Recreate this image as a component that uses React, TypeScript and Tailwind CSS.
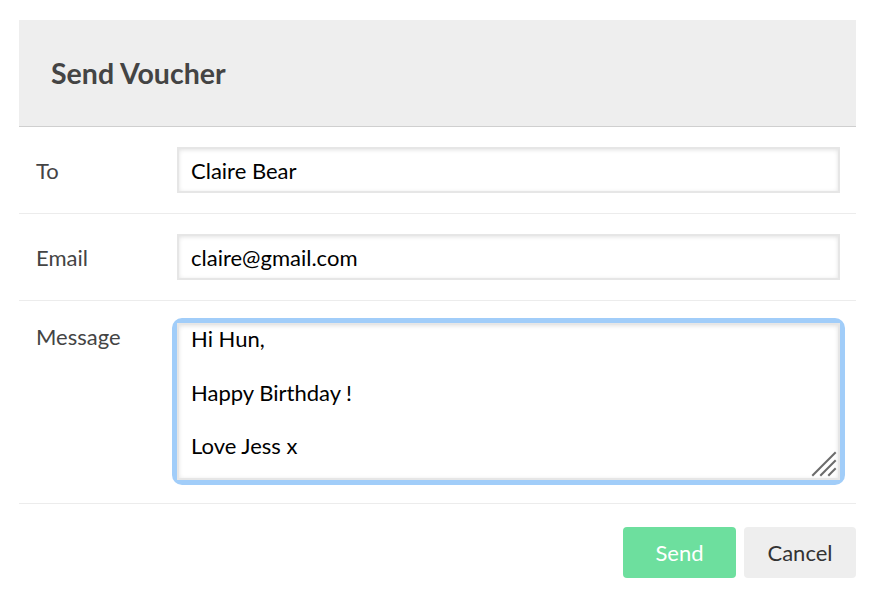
import React from "react";

const font = { fontFamily: "Lato, 'Open Sans', sans-serif" };

function Grip() {
  return (
    <svg
      className="pointer-events-none absolute bottom-[3px] right-[3px]"
      width="26"
      height="26"
      viewBox="0 0 26 26"
    >
      <g stroke="#6b6b6b" strokeWidth="2" strokeLinecap="square">
        <line x1="2" y1="24" x2="24" y2="2" />
        <line x1="10" y1="24" x2="24" y2="10" />
        <line x1="18" y1="24" x2="24" y2="18" />
      </g>
    </svg>
  );
}

function Row({ label, children, top }: { label: string; children: React.ReactNode; top?: boolean }) {
  return (
    <div className={`flex border-b border-[#ececec] pl-[17px] pr-[16px] ${top ? "items-start pt-[22px] pb-[23px]" : "items-center py-[20px]"}`}>
      <div className="w-[141px] shrink-0 text-[22px] leading-[27px] text-[#444]">{label}</div>
      <div className="flex-1">{children}</div>
    </div>
  );
}

function Input({ value }: { value: string }) {
  return (
    <input
      readOnly
      value={value}
      className="block h-[46px] w-full border-2 border-[#e6e6e6] bg-white px-[12px] text-[22px] text-black shadow-[inset_0_1px_4px_rgba(0,0,0,0.12)] outline-none"
      style={font}
    />
  );
}

export default function App() {
  return (
    <div className="min-h-screen bg-white" style={font}>
      <div className="ml-[19px] w-[837px] pt-[20px]">
        {/* Header */}
        <div className="flex h-[107px] items-center border-b border-[#cfcfcf] bg-[#eeeeee] pl-[32px]">
          <h1 className="text-[28.5px] font-bold text-[#444]">Send Voucher</h1>
        </div>

        <Row label="To">
          <Input value="Claire Bear" />
        </Row>
        <Row label="Email">
          <Input value="claire@gmail.com" />
        </Row>
        <Row label="Message" top>
          <div className="relative rounded-[5px] shadow-[0_0_0_5px_#a1cdf9]">
            <textarea
              readOnly
              defaultValue={"Hi Hun,\n\nHappy Birthday !\n\nLove Jess x"}
              className="block h-[157px] w-full resize-none border-2 border-[#e6e6e6] bg-white px-[12px] pt-[1px] text-[22px] leading-[26.8px] text-black shadow-[inset_0_1px_4px_rgba(0,0,0,0.12)] outline-none"
              style={font}
            />
            <Grip />
          </div>
        </Row>

        {/* Actions */}
        <div className="flex justify-end gap-[8px] pt-[23px]">
          <button className="h-[51px] w-[113px] rounded-[4px] bg-[#6ddf9e] text-[22px] text-white">
            Send
          </button>
          <button className="h-[51px] w-[112px] rounded-[4px] bg-[#eeeeee] text-[22px] text-[#333]">
            Cancel
          </button>
        </div>
      </div>
    </div>
  );
}
